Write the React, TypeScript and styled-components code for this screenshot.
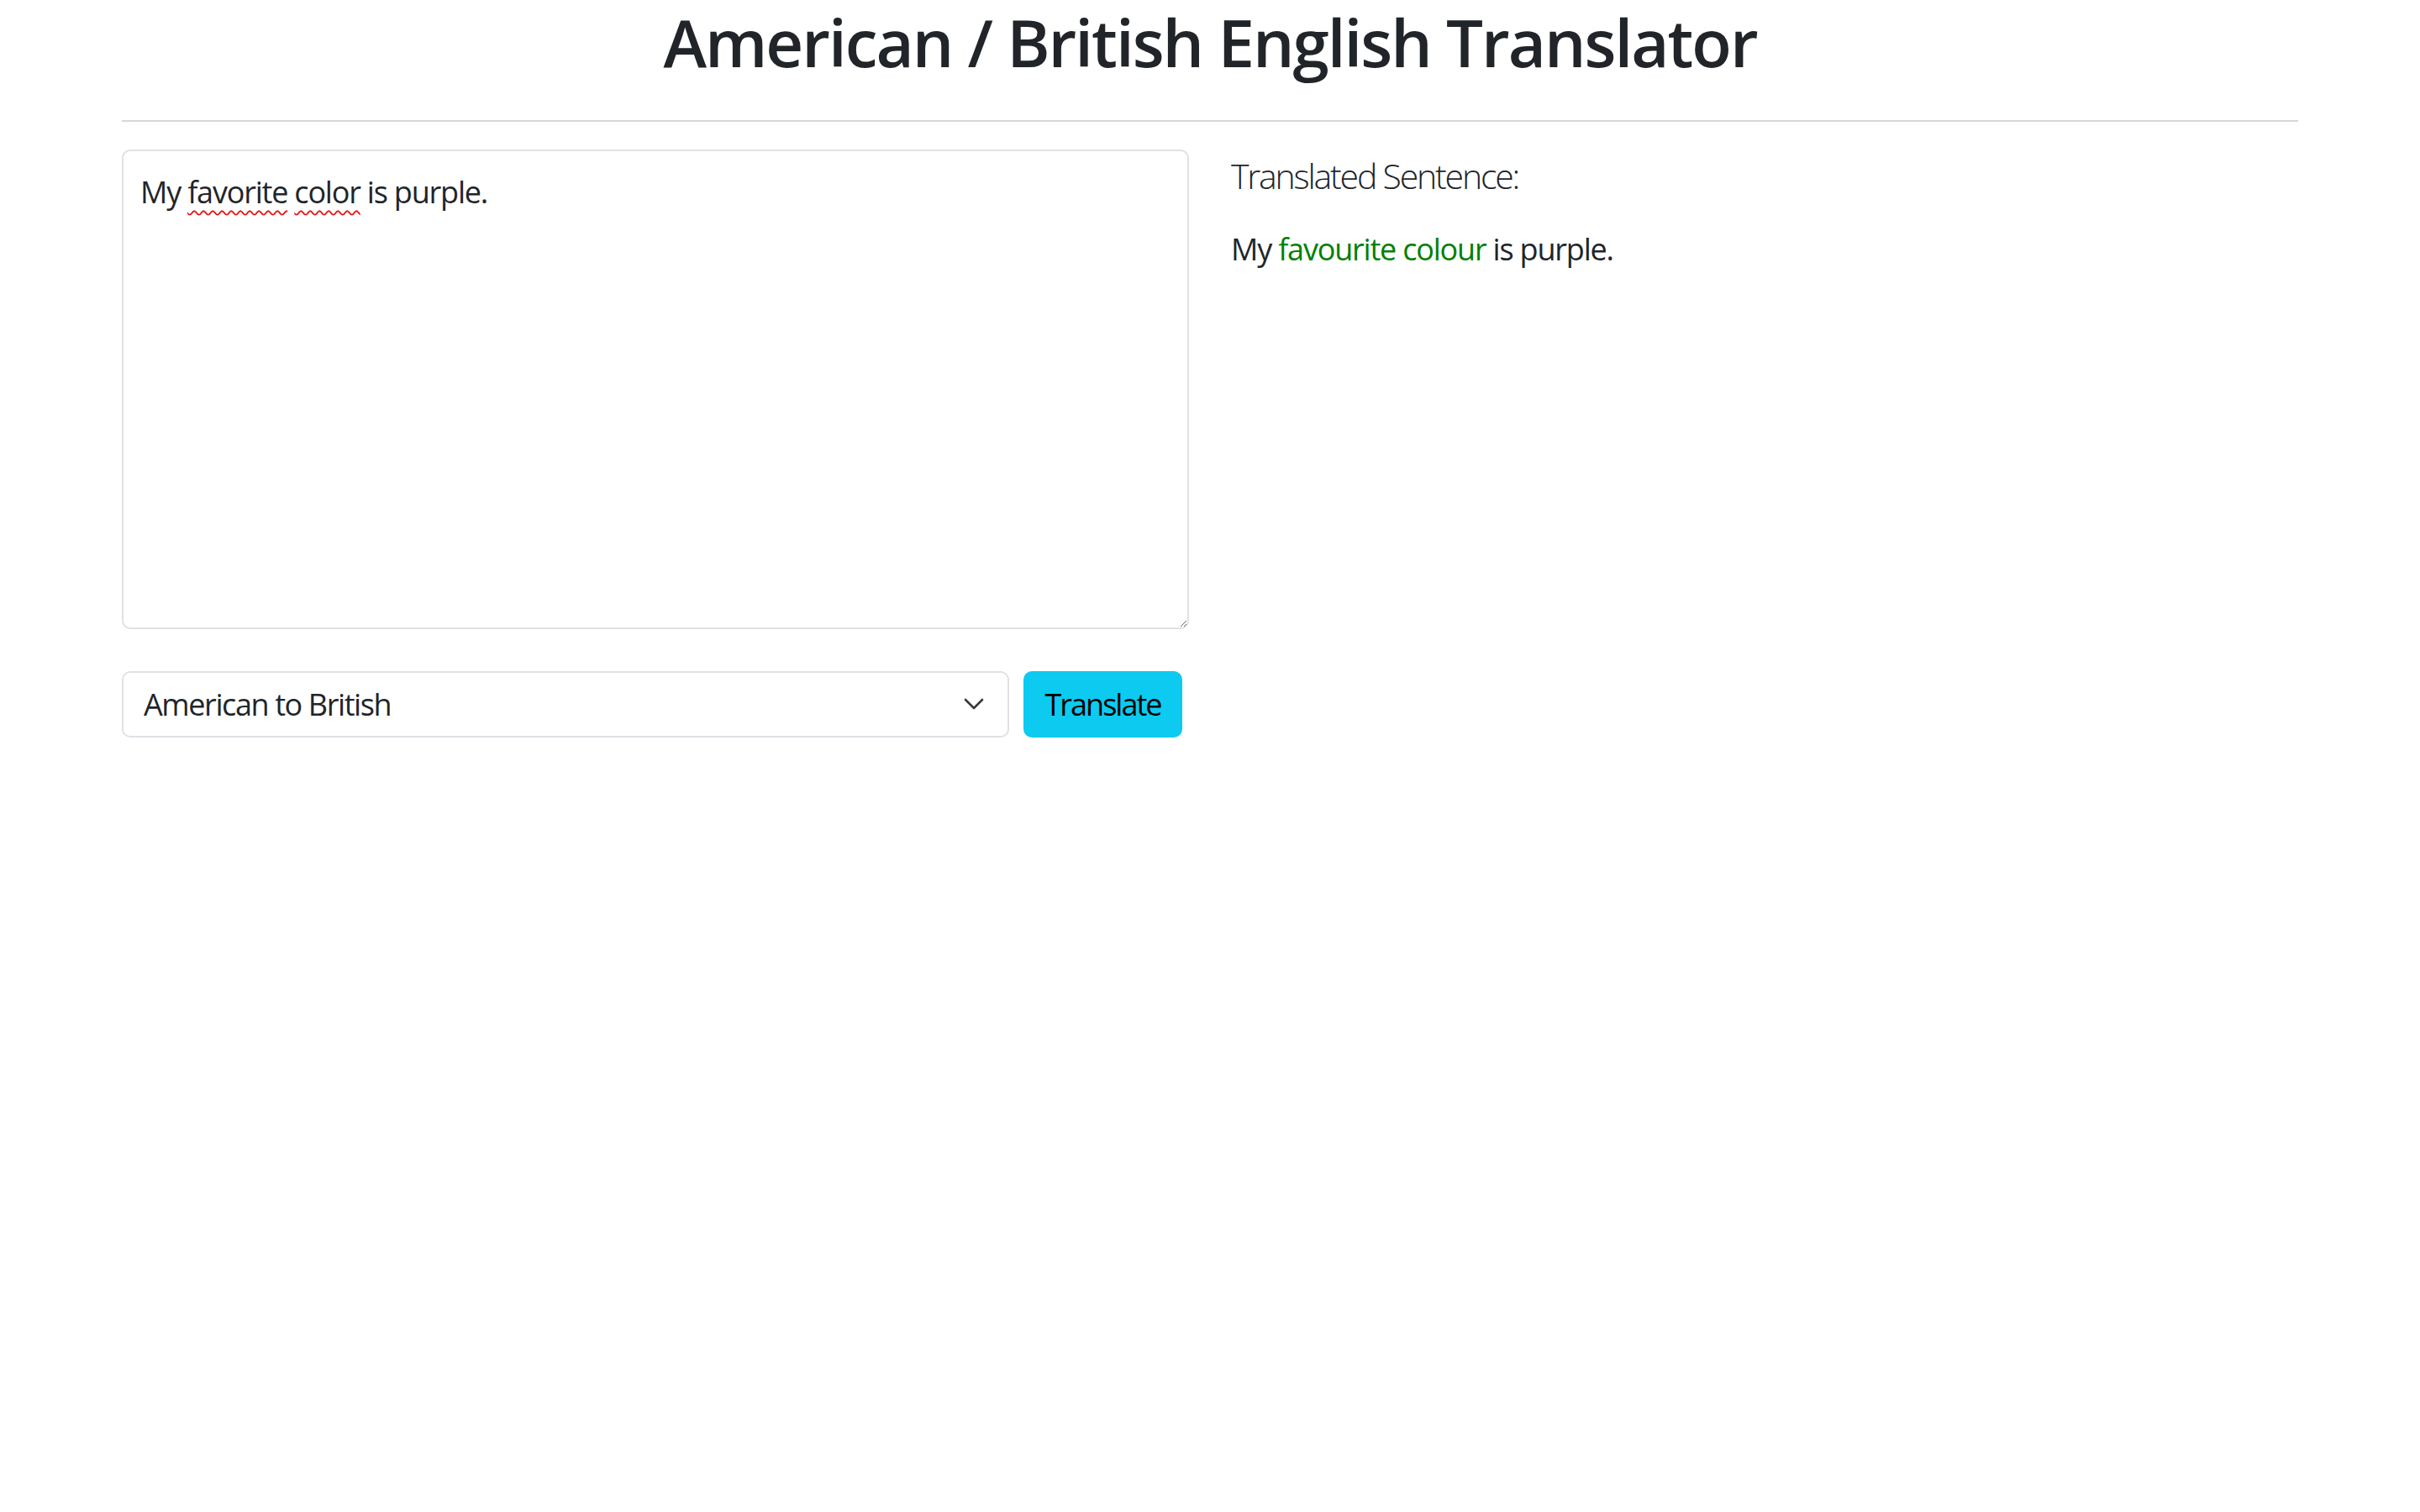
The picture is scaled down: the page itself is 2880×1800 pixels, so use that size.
import React from "react";
import styled, { createGlobalStyle } from "styled-components";

const GlobalStyle = createGlobalStyle`
  body {
    margin: 0;
    background: #fff;
    color: #212529;
    font-family: "Open Sans", "Noto Sans", sans-serif;
    font-size: 36px;
    line-height: 1.5;
    letter-spacing: -1.2px;
  }
`;

const Page = styled.div`
  padding: 0 145px;
`;

const Title = styled.h1`
  margin: 0;
  padding-top: 4px;
  text-align: center;
  font-size: 78px;
  font-weight: 600;
  line-height: 1.2;
  letter-spacing: -2px;
  color: #212529;
`;

const Divider = styled.hr`
  margin: 45px 0 33px;
  border: 0;
  border-top: 2px solid #d6d7d8;
`;

const Columns = styled.div`
  display: grid;
  grid-template-columns: 1270px 1270px;
  column-gap: 50px;
  align-items: start;
`;

const LeftCol = styled.div`
  display: flex;
  flex-direction: column;
  gap: 50px;
`;

const TextBox = styled.div`
  box-sizing: border-box;
  height: 571px;
  padding: 22px 20px 19px;
  border: 2px solid #dee2e6;
  border-radius: 10px;
  overflow: auto;
  resize: both;
  outline: none;
`;

const Misspelled = styled.span`
  text-decoration: underline wavy #e5191b;
  text-decoration-thickness: 2px;
  text-underline-offset: 8px;
  text-decoration-skip-ink: none;
`;

const Controls = styled.div`
  display: flex;
  gap: 17px;
  height: 79px;
`;

const SelectWrap = styled.div`
  position: relative;
  width: 1056px;
`;

const Select = styled.select`
  appearance: none;
  box-sizing: border-box;
  width: 100%;
  height: 100%;
  padding: 0 70px 0 24px;
  border: 2px solid #dee2e6;
  border-radius: 10px;
  background: #fff;
  color: #212529;
  font-family: inherit;
  font-size: 36px;
  letter-spacing: -1.4px;
`;

const Chevron = styled.svg`
  position: absolute;
  right: 30px;
  top: 50%;
  width: 24px;
  height: 14px;
  margin-top: -7px;
  pointer-events: none;
`;

const Button = styled.button`
  box-sizing: border-box;
  width: 189px;
  height: 100%;
  padding: 0;
  border: 0;
  border-radius: 10px;
  background: #0dcaf0;
  color: #000;
  font-family: inherit;
  font-size: 36px;
  letter-spacing: -2px;
  cursor: pointer;
`;

const RightCol = styled.div`
  display: flex;
  flex-direction: column;
  gap: 36px;
  padding-top: 7px;
`;

const Lead = styled.div`
  font-size: 41px;
  font-weight: 300;
  line-height: 1.2;
  letter-spacing: -2.2px;
`;

const Result = styled.div`
  font-size: 36px;
`;

const Highlight = styled.span`
  color: #008000;
`;

export default function App() {
  return (
    <Page>
      <GlobalStyle />
      <Title>American / British English Translator</Title>
      <Divider />
      <Columns>
        <LeftCol>
          <TextBox contentEditable suppressContentEditableWarning>
            My <Misspelled>favorite</Misspelled> <Misspelled>color</Misspelled> is purple.
          </TextBox>
          <Controls>
            <SelectWrap>
              <Select defaultValue="american-to-british">
                <option value="american-to-british">American to British</option>
                <option value="british-to-american">British to American</option>
              </Select>
              <Chevron viewBox="0 0 24 14" fill="none">
                <path d="M2 2l10 10L22 2" stroke="#343a40" strokeWidth="2.6" strokeLinecap="round" strokeLinejoin="round" />
              </Chevron>
            </SelectWrap>
            <Button>Translate</Button>
          </Controls>
        </LeftCol>
        <RightCol>
          <Lead>Translated Sentence:</Lead>
          <Result>
            My <Highlight>favourite colour</Highlight> is purple.
          </Result>
        </RightCol>
      </Columns>
    </Page>
  );
}
